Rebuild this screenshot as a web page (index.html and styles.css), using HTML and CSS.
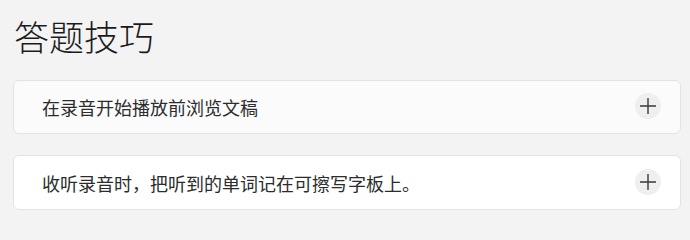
FILE: index.html
```html
<!DOCTYPE html>
<html lang="zh-CN">
<head>
<meta charset="utf-8">
<link rel="stylesheet" href="styles.css">
</head>
<body>
<div class="page">
  <h1 class="title">答题技巧</h1>
  <div class="list">
    <div class="item item-hover">
      <span class="item-text">在录音开始播放前浏览文稿</span>
      <button class="toggle" aria-label="展开">
        <svg width="18" height="18" viewBox="0 0 18 18"><path d="M9 1v16M1 9h16" stroke="#3a3a3a" stroke-width="1.4" fill="none"/></svg>
      </button>
    </div>
    <div class="item item-tall">
      <span class="item-text">收听录音时，把听到的单词记在可擦写字板上。</span>
      <button class="toggle" aria-label="展开">
        <svg width="18" height="18" viewBox="0 0 18 18"><path d="M9 1v16M1 9h16" stroke="#3a3a3a" stroke-width="1.4" fill="none"/></svg>
      </button>
    </div>
  </div>
</div>
</body>
</html>
```
FILE: styles.css
```css
html, body {
  margin: 0;
  padding: 0;
  background: #f3f3f3;
}
.page {
  padding: 15px 9px 0 13px;
  font-family: "Noto Sans CJK SC", "Noto Sans", sans-serif;
}
.title {
  margin: 0 0 24px 0;
  font-size: 35px;
  line-height: 41px;
  font-weight: 300;
  color: #1b1b1b;
  padding-left: 1px;
}
.list {
  display: flex;
  flex-direction: column;
  gap: 21px;
}
.item {
  height: 54px;
  box-sizing: border-box;
  border: 1px solid #e3e3e3;
  border-radius: 6px;
  background: #ffffff;
  display: flex;
  align-items: center;
  justify-content: space-between;
  padding: 0 19px 0 28px;
}
.item-tall {
  height: 55px;
}
.item-hover {
  background: #fbfbfb;
}
.item-text {
  font-size: 18px;
  color: #2c2c2c;
  line-height: 24px;
}
.toggle {
  width: 26px;
  height: 26px;
  border-radius: 50%;
  border: none;
  background: #efefef;
  padding: 0;
  display: flex;
  align-items: center;
  justify-content: center;
  margin-top: -2px;
}
```
